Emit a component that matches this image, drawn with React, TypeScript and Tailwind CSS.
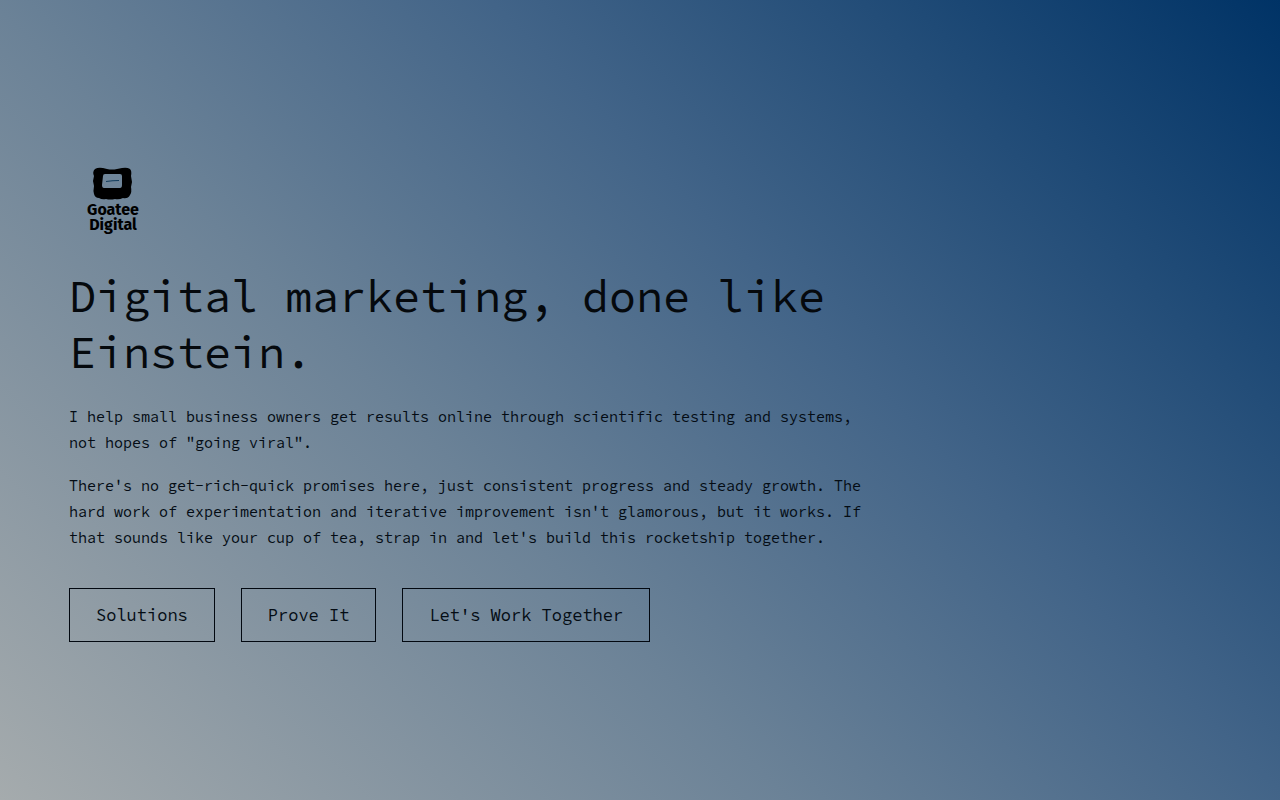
import type { ReactNode } from 'react';

const links = [
  { label: 'Solutions', href: '#solutions' },
  { label: 'Prove It', href: '#prove-it' },
  { label: "Let's Work Together", href: '#contact' },
];

function Logo() {
  return (
    <svg
      viewBox="0 0 87 87"
      className="h-[87px] w-[87px]"
      role="img"
      aria-label="Goatee Digital"
    >
      <path
        fillRule="evenodd"
        d="M26 11 Q29 9 34 10 L38 11 Q43 12 48 11 L53 10 Q58 9 61 11 Q63 13 62 18 L63 24 L62 29 Q63 34 61 37 Q59 41 54 40 Q50 42 46 41 Q41 42 37 41 Q33 42 30 40 Q26 40 25 36 Q24 33 25 28 L24 23 L25 18 Q23 14 26 11 Z M36 16 Q34 16 34 18 L33 27 Q33 30 35 30 L51 30 Q53 30 53 27 L53 18 Q53 16 51 16 Z"
      />
      <path className="fill-[#123c5c]" d="M37 23 Q43 22 50 22 L50 23 Q44 23 37 24 Z" />
      <text textAnchor="middle" className="font-['Fira_Sans','Roboto',sans-serif] text-[16px] font-bold">
        <tspan x="44" y="57">Goatee</tspan>
        <tspan x="44" y="72">Digital</tspan>
      </text>
    </svg>
  );
}

function Button({ href, children }: { href: string; children: ReactNode }) {
  return (
    <a
      href={href}
      className="border border-[#020810] px-[26px] py-3 text-[17px] leading-7 hover:bg-black/10"
    >
      {children}
    </a>
  );
}

export default function App() {
  return (
    <main className="flex min-h-screen flex-col justify-center bg-[linear-gradient(45deg,#a5abad,#6b8297_38%,#426488_62%,#003366)] px-[69px] font-['Source_Code_Pro','Liberation_Mono',monospace] text-[#040c14]">
      <div className="max-w-[800px]">
        <Logo />
        <h1 className="mt-[23px] text-[45px] leading-14 text-[#05090d]">
          Digital marketing, done like Einstein.
        </h1>
        <div className="mt-6 space-y-[17px] text-[15px] leading-[26px]">
          <p>
            I help small business owners get results online through scientific testing and systems,
            not hopes of "going viral".
          </p>
          <p>
            There's no get-rich-quick promises here, just consistent progress and steady growth. The
            hard work of experimentation and iterative improvement isn't glamorous, but it works. If
            that sounds like your cup of tea, strap in and let's build this rocketship together.
          </p>
        </div>
        <nav className="mt-[37px] flex flex-wrap gap-[26px]">
          {links.map((link) => (
            <Button key={link.label} href={link.href}>
              {link.label}
            </Button>
          ))}
        </nav>
      </div>
    </main>
  );
}
